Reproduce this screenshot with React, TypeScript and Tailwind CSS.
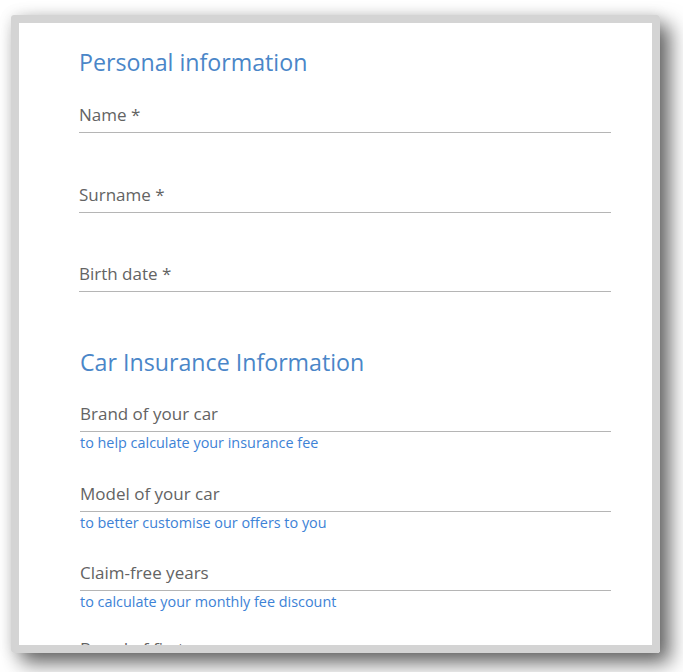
const personal = ['Name *', 'Surname *', 'Birth date *'];

const car = [
  { label: 'Brand of your car', hint: 'to help calculate your insurance fee' },
  { label: 'Model of your car', hint: 'to better customise our offers to you' },
  { label: 'Claim-free years', hint: 'to calculate your monthly fee discount' },
];

const Field = ({ label, hint, gap }: { label: string; hint?: string; gap: string }) => (
  <div className={gap}>
    <div className="border-b border-[#b5b5b5] pb-[5px] text-[17px] leading-[24px] text-[#636363]">{label}</div>
    {hint !== undefined && (
      <div className="h-0 overflow-visible text-[14.4px] leading-[22px] text-[#3d82d6]">{hint}</div>
    )}
  </div>
);

export default function App() {
  return (
    <div className="min-h-screen bg-white pl-[11px] pt-[15px]" style={{ fontFamily: '"Open Sans", sans-serif' }}>
      <div className="w-[649px] rounded-[3px] border-8 border-[#d4d4d4] shadow-[10px_10px_20px_rgba(0,0,0,0.6),0_0_14px_rgba(0,0,0,0.1)]">
        <div className="h-[622px] overflow-hidden bg-white pl-[60px] pr-[41px] pt-[23px]">
          <h2 className="text-[23.2px] leading-[32px] text-[#4a86c8]">Personal information</h2>
          <Field label={personal[0]} gap="mt-[25px]" />
          <Field label={personal[1]} gap="mt-[50px]" />
          <Field label={personal[2]} gap="mt-[49px]" />
          <h2 className="mt-[54px] pl-[1px] text-[23.2px] leading-[32px] text-[#4a86c8]">Car Insurance Information</h2>
          <div className="pl-[1px]">
            <Field label={car[0].label} hint={car[0].hint} gap="mt-[24px]" />
            <Field label={car[1].label} hint={car[1].hint} gap="mt-[50px]" />
            <Field label={car[2].label} hint={car[2].hint} gap="mt-[49px]" />
            <Field label="Brand of first car" gap="mt-[46px]" />
          </div>
        </div>
      </div>
    </div>
  );
}
